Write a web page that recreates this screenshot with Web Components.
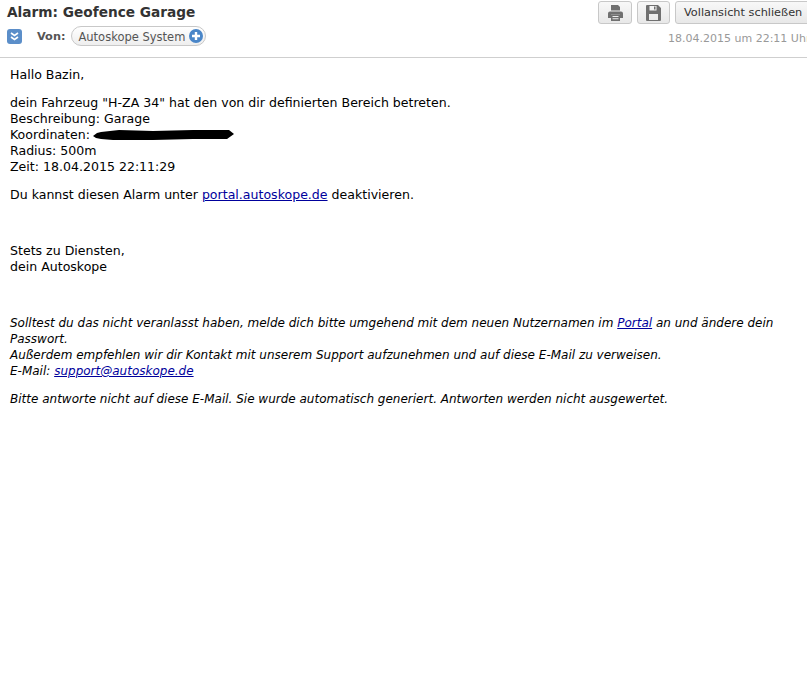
<!DOCTYPE html>
<html>
<head>
<meta charset="utf-8">
<title>Alarm: Geofence Garage</title>
<style>
  html, body { margin: 0; background: #fff; overflow: hidden; }
  body { font-family: "DejaVu Sans", Verdana, sans-serif; width: 807px; height: 700px; }
</style>
</head>
<body>
<mail-view>
  <mail-header slot="header"></mail-header>
  <mail-body slot="body"></mail-body>
</mail-view>

<script>
class MailView extends HTMLElement {
  constructor() {
    super();
    this.attachShadow({ mode: 'open' });
    this.shadowRoot.innerHTML = `
      <style>
        :host { display: block; }
      </style>
      <slot name="header"></slot>
      <slot name="body"></slot>
    `;
  }
}

class IconButton extends HTMLElement {
  constructor() {
    super();
    this.attachShadow({ mode: 'open' });
    this.shadowRoot.innerHTML = `
      <style>
        :host {
          display: flex;
          align-items: center;
          justify-content: center;
          box-sizing: border-box;
          height: 23px;
          padding: 0 8px;
          border: 1px solid #c8c8c8;
          border-radius: 3px;
          background: linear-gradient(#f8f8f8, #e8e8e8);
          color: #333;
          font-size: 11.3px;
          white-space: nowrap;
        }
      </style>
      <slot></slot>
    `;
  }
}

class ContactPill extends HTMLElement {
  constructor() {
    super();
    this.attachShadow({ mode: 'open' });
    this.shadowRoot.innerHTML = `
      <style>
        :host {
          display: flex;
          align-items: center;
          box-sizing: border-box;
          height: 20px;
          padding: 0 2px 0 6px;
          gap: 4px;
          border: 1px solid #c8c8c8;
          border-radius: 10px;
          background: linear-gradient(#fff, #eeeeee);
          color: #555;
          font-size: 11.5px;
        }
        slot { display: block; padding-top: 2px; }
        svg { display: block; }
      </style>
      <slot></slot>
      <svg width="14" height="14" viewBox="0 0 14 14">
        <circle cx="7" cy="7" r="7" fill="#4a86c8"/>
        <path d="M7 3v8M3 7h8" stroke="#fff" stroke-width="2.4"/>
      </svg>
    `;
  }
}

class MailHeader extends HTMLElement {
  constructor() {
    super();
    this.attachShadow({ mode: 'open' });
    this.shadowRoot.innerHTML = `
      <style>
        :host {
          display: block;
          box-sizing: border-box;
          height: 58px;
          padding: 0 0 0 7px;
          border-bottom: 1px solid #cfcfcf;
          overflow: hidden;
        }
        .top {
          display: flex;
          justify-content: space-between;
          height: 24px;
        }
        h1 {
          margin: 3px 0 0;
          font-size: 13.7px;
          line-height: 18px;
          font-weight: bold;
          color: #333;
        }
        .actions {
          display: flex;
          gap: 5px;
          margin: 1px -8px 0 0;
        }
        .actions icon-button { width: 34px; padding: 0; }
        .actions icon-button.save { width: 33px; }
        .actions icon-button.wide { width: 140px; padding: 0 0 0 8px; justify-content: flex-start; }
        .bottom {
          display: flex;
          justify-content: space-between;
          margin-top: 2px;
        }
        .from { display: flex; align-items: center; }
        .toggle {
          width: 15px;
          height: 15px;
          border-radius: 3px;
          background: #5b8ec9;
          display: block;
        }
        .label {
          margin: 0 6px 0 15px;
          font-size: 11.3px;
          font-weight: bold;
          color: #555;
        }
        .date {
          margin: 6px 0 0;
          font-size: 11px;
          color: #999;
          white-space: nowrap;
          width: 139px;
          overflow: hidden;
        }
      </style>
      <div class="top">
        <h1>Alarm: Geofence Garage</h1>
        <div class="actions">
          <icon-button>
            <svg width="15" height="16" viewBox="0 0 15 16">
              <path fill="#707070" d="M3 0h7l2 2v3.500H3z"/>
              <path fill="#707070" d="M2 6.500h11a2 2 0 0 1 2 2V13h-3V9.500H3V13H0V8.500a2 2 0 0 1 2-2z"/>
              <path fill="#707070" fill-rule="evenodd" d="M3 9.500h9V16H3zM4.500 11v1h6v-1zM4.500 13.200v1h6v-1z"/>
            </svg>
          </icon-button>
          <icon-button class="save">
            <svg width="15" height="16" viewBox="0 0 15 16">
              <path fill="#707070" fill-rule="evenodd" d="M1 0h11l3 3v12a1 1 0 0 1-1 1H1a1 1 0 0 1-1-1V1a1 1 0 0 1 1-1zM3.500 1v4.500h7V1zM3 9v6h9V9z"/>
              <rect x="8" y="1.500" width="1.500" height="3" fill="#707070"/>
            </svg>
          </icon-button>
          <icon-button class="wide">Vollansicht schließen</icon-button>
        </div>
      </div>
      <div class="bottom">
        <div class="from">
          <svg class="toggle" viewBox="0 0 15 15">
            <path d="M4 4l3.500 2.500L11 4M4 8l3.500 2.500L11 8" fill="none" stroke="#fff" stroke-width="1.600"/>
          </svg>
          <span class="label">Von:</span>
          <contact-pill>Autoskope System</contact-pill>
        </div>
        <p class="date">18.04.2015 um 22:11 Uhr</p>
      </div>
    `;
  }
}

class MailBody extends HTMLElement {
  constructor() {
    super();
    this.attachShadow({ mode: 'open' });
    this.shadowRoot.innerHTML = `
      <style>
        :host {
          display: block;
          padding: 9px 10px 0;
          font-size: 12.57px;
          line-height: 16px;
          color: #000;
        }
        p { margin: 0 0 12px; }
        a { color: #00009c; }
        .mark {
          display: inline-block;
          width: 141px;
          height: 12px;
          margin: 2px 0 0 3px;
          vertical-align: top;
        }
        .gap { margin-bottom: 40px; }
        .note { font-style: italic; font-size: 12px; }
      </style>
      <p>Hallo Bazin,</p>
      <p>dein Fahrzeug "H-ZA 34" hat den von dir definierten Bereich betreten.<br>
      Beschreibung: Garage<br>
      Koordinaten:<svg class="mark" viewBox="0 0 141 12"><path fill="#000" d="M0 7L4 4 8 3 26 1 60 2 100 1 136 1 141 5 134 10 100 10 60 11 20 11 8 10 3 9z"/></svg><br>
      Radius: 500m<br>
      Zeit: 18.04.2015 22:11:29</p>
      <p class="gap">Du kannst diesen Alarm unter <a href="#">portal.autoskope.de</a> deaktivieren.</p>
      <p class="gap">Stets zu Diensten,<br>dein Autoskope</p>
      <p class="note">Solltest du das nicht veranlasst haben, melde dich bitte umgehend mit dem neuen Nutzernamen im <a href="#">Portal</a> an und ändere dein Passwort.<br>
      Außerdem empfehlen wir dir Kontakt mit unserem Support aufzunehmen und auf diese E-Mail zu verweisen.<br>
      E-Mail: <a href="#">support@autoskope.de</a></p>
      <p class="note">Bitte antworte nicht auf diese E-Mail. Sie wurde automatisch generiert. Antworten werden nicht ausgewertet.</p>
    `;
  }
}

customElements.define('mail-view', MailView);
customElements.define('icon-button', IconButton);
customElements.define('contact-pill', ContactPill);
customElements.define('mail-header', MailHeader);
customElements.define('mail-body', MailBody);
</script>
</body>
</html>
